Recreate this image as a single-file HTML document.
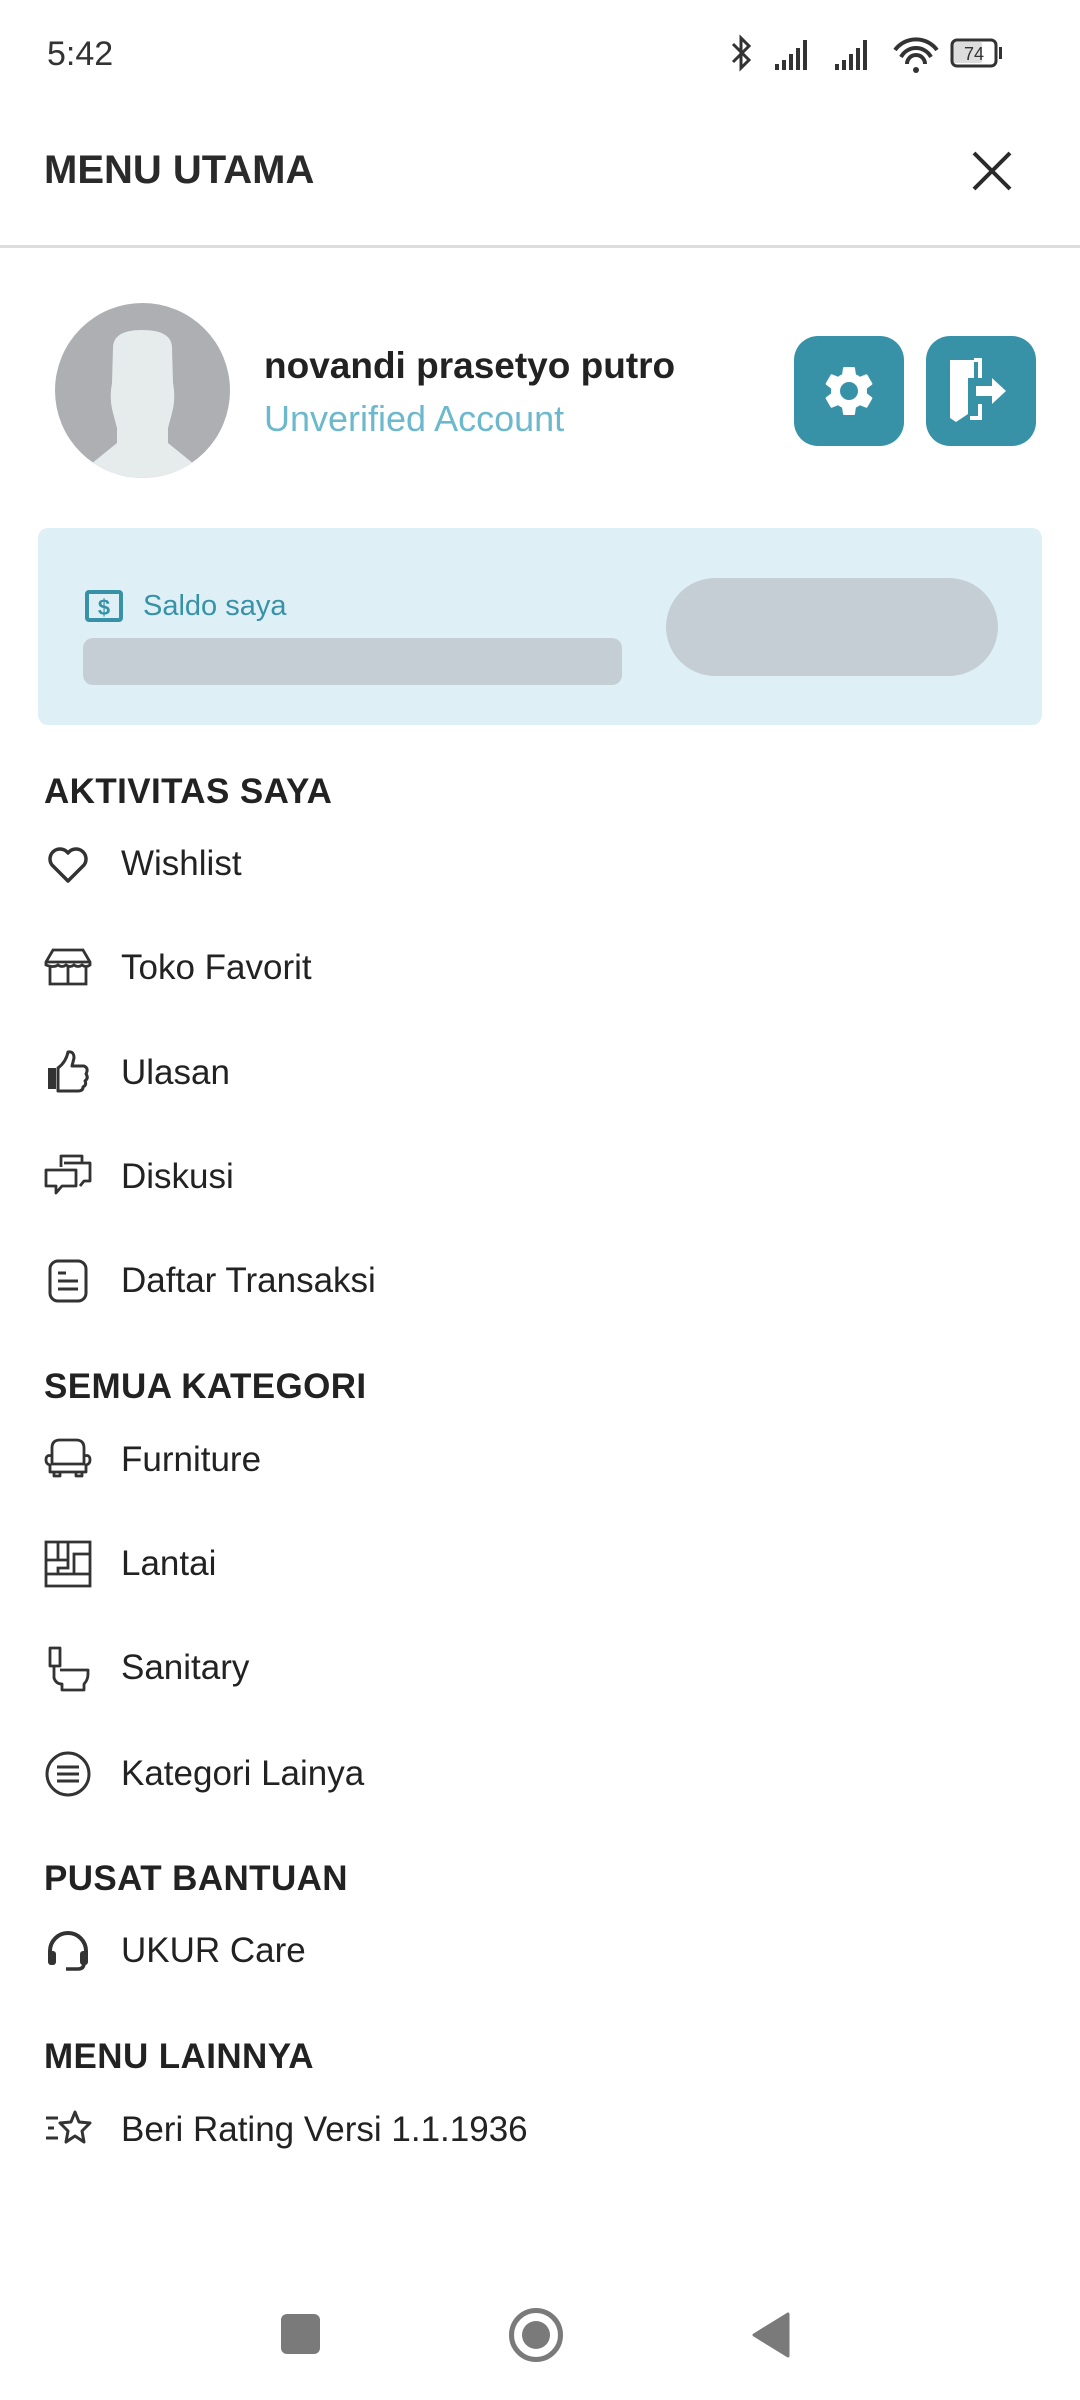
<!DOCTYPE html>
<html><head><meta charset="utf-8"><style>
*{margin:0;padding:0;box-sizing:border-box}
body{width:1080px;height:2400px;background:#fff;position:relative;overflow:hidden;font-family:"Liberation Sans",sans-serif;color:#222}
.a{position:absolute}
.t{position:absolute;left:121px;font-size:35px;line-height:40px;color:#222;white-space:nowrap}
.h{position:absolute;left:44px;font-size:35px;line-height:40px;font-weight:700;color:#222;letter-spacing:0.4px;white-space:nowrap}
.i{position:absolute;left:44px;width:48px;height:48px}
</style></head><body>
<!-- status bar -->
<div class="a" style="left:47px;top:34px;font-size:34px;line-height:40px;color:#333">5:42</div>
<svg class="a" style="left:729px;top:34px" width="310" height="42" viewBox="0 0 310 42">
<path d="M4 10 L20 26 L12 34 L12 4 L20 12 L4 28" fill="none" stroke="#333" stroke-width="3"/>
<g fill="#333"><rect x="46" y="30" width="4" height="6"/><rect x="53" y="26" width="4" height="10"/><rect x="60" y="20" width="4" height="16"/><rect x="67" y="14" width="4" height="22"/><rect x="74" y="6" width="4" height="30"/>
<rect x="106" y="30" width="4" height="6"/><rect x="113" y="26" width="4" height="10"/><rect x="120" y="20" width="4" height="16"/><rect x="127" y="14" width="4" height="22"/><rect x="134" y="6" width="4" height="30"/></g>
<path d="M166 16 A26 26 0 0 1 208 16 M172 23 A17 17 0 0 1 202 23 M178 30 A8 8 0 0 1 196 30" fill="none" stroke="#333" stroke-width="4"/>
<circle cx="187" cy="36" r="3" fill="#333"/>
<rect x="223" y="8" width="30" height="21" rx="2" fill="#ddd"/>
<rect x="223" y="6" width="44" height="26" rx="5" fill="none" stroke="#333" stroke-width="3"/>
<rect x="270" y="13" width="3" height="12" fill="#333"/>
<text x="245" y="26" font-size="18" text-anchor="middle" fill="#333" font-family="Liberation Sans">74</text>
</svg>
<!-- header -->
<div class="a" style="left:44px;top:148px;font-size:40px;line-height:44px;font-weight:700;color:#2a2a2a">MENU UTAMA</div>
<svg class="a" style="left:970px;top:150px" width="44" height="42" viewBox="0 0 44 42"><path d="M4 3 L40 39 M40 3 L4 39" stroke="#2a2a2a" stroke-width="4"/></svg>
<div class="a" style="left:0;top:245px;width:1080px;height:3px;background:#ddd"></div>
<!-- profile -->
<svg class="a" style="left:55px;top:303px" width="175" height="175" viewBox="0 0 175 175">
<defs><clipPath id="c"><circle cx="87.5" cy="87.5" r="87.5"/></clipPath></defs>
<circle cx="87.5" cy="87.5" r="87.5" fill="#adafb3"/>
<g clip-path="url(#c)" fill="#e6ecec"><path d="M58 45 Q58 27 87 27 Q117 27 117 45 L118 80 Q121 95 117 110 L113 125 L113 140 L150 170 L150 180 L25 180 L25 170 L62 140 L62 125 L58 110 Q54 95 57 80 Z"/></g>
</svg>
<div class="a" style="left:264px;top:344px;font-size:37px;line-height:44px;font-weight:700;color:#222">novandi prasetyo putro</div>
<div class="a" style="left:264px;top:398px;font-size:36px;line-height:42px;color:#6cb8cd">Unverified Account</div>
<div class="a" style="left:794px;top:336px;width:110px;height:110px;border-radius:24px;background:#3792a8"></div>
<svg class="a" style="left:819px;top:361px" width="60" height="60" viewBox="0 0 24 24"><path fill="#fff" d="M19.14 12.94c.04-.3.06-.61.06-.94s-.02-.64-.07-.94l2.030-1.58a.49.49 0 0 0 .12-.61l-1.92-3.32a.49.49 0 0 0-.59-.22l-2.39.96c-.5-.38-1.03-.7-1.62-.94l-.36-2.54a.48.48 0 0 0-.48-.41h-3.84c-.24 0-.43.17-.47.41l-.36 2.54c-.59.24-1.130.57-1.62.94l-2.39-.96a.48.48 0 0 0-.59.22L2.74 8.87c-.12.21-.08.47.12.61l2.03 1.58c-.05.3-.09.63-.09.94s.02.64.07.94l-2.03 1.58a.49.49 0 0 0-.12.61l1.92 3.32c.12.22.37.29.59.22l2.39-.96c.5.38 1.03.7 1.62.94l.36 2.54c.05.24.24.41.48.41h3.84c.24 0 .44-.17.47-.41l.36-2.54c.59-.24 1.13-.56 1.62-.94l2.39.96c.22.08.47 0 .59-.22l1.92-3.32c.12-.22.07-.47-.12-.61l-2.01-1.58zM12 15.6A3.6 3.6 0 1 1 12 8.4a3.6 3.6 0 0 1 0 7.2z"/></svg>
<div class="a" style="left:926px;top:336px;width:110px;height:110px;border-radius:24px;background:#3792a8"></div>
<svg class="a" style="left:946px;top:358px" width="70" height="66" viewBox="0 0 70 66"><path d="M4 2 L28 2 L28 20 L22 20 L22 56 L10 64 L4 60 Z" fill="#fff"/><path d="M28 2 L34 2 L34 20 M34 46 L34 60 L24 60" fill="none" stroke="#fff" stroke-width="4"/><path d="M30 28 L46 28 L46 20 L60 33 L46 46 L46 38 L30 38 Z" fill="#fff"/></svg>
<!-- saldo card -->
<div class="a" style="left:38px;top:528px;width:1004px;height:197px;border-radius:10px;background:#def0f6"></div>
<svg class="a" style="left:85px;top:590px" width="38" height="32" viewBox="0 0 38 32"><rect x="2" y="2" width="34" height="28" rx="2" fill="none" stroke="#3792a8" stroke-width="4"/><text x="19" y="25" font-size="22" font-weight="700" text-anchor="middle" fill="#3792a8" font-family="Liberation Sans">$</text></svg>
<div class="a" style="left:143px;top:589px;font-size:29px;line-height:34px;color:#3792a8">Saldo saya</div>
<div class="a" style="left:83px;top:638px;width:539px;height:47px;border-radius:10px;background:#c5ced4"></div>
<div class="a" style="left:666px;top:578px;width:332px;height:98px;border-radius:49px;background:#c5ced4"></div>
<!-- sections -->
<div class="h" style="top:772px">AKTIVITAS SAYA</div>
<svg class="i" style="top:840px" viewBox="0 0 48 48"><path d="M24 41 L8 25 A9.5 9.5 0 0 1 24 13 A9.5 9.5 0 0 1 40 25 Z" fill="none" stroke="#333" stroke-width="3.5" stroke-linejoin="round"/></svg>
<div class="t" style="top:844px">Wishlist</div>
<svg class="i" style="top:944px" viewBox="0 0 48 48"><path d="M9 6 L39 6 L46 18 L46 21 Q42 24 38 21 Q34 24 30 21 Q26 24 22 21 Q18 24 14 21 Q10 24 2 21 L2 18 Z M2 18 L46 18 M6 23 L6 40 L42 40 L42 23 M24 23 L24 40" fill="none" stroke="#333" stroke-width="2.8"/></svg>
<div class="t" style="top:948px">Toko Favorit</div>
<svg class="i" style="top:1048px" viewBox="0 0 48 48"><path d="M4 20 L12 20 L12 41 L4 41 Z" fill="#333"/><path d="M14 20 Q22 14 24 4 Q30 3 30 10 L28 18 L40 18 Q45 20 42 26 Q45 30 41 33 Q43 37 39 39 Q39 43 34 43 L14 43 Z" fill="none" stroke="#333" stroke-width="3" stroke-linejoin="round"/></svg>
<div class="t" style="top:1053px">Ulasan</div>
<svg class="i" style="top:1153px" viewBox="0 0 48 48"><path d="M17 14 L17 3 L38 3 L38 9 M2 17 L32 17 L32 33 L18 33 L12 40 L12 33 L2 33 Z M20 10 L46 10 L46 28 L40 28 L36 33" fill="none" stroke="#333" stroke-width="2.8" stroke-linejoin="round"/></svg>
<div class="t" style="top:1157px">Diskusi</div>
<svg class="i" style="top:1257px" viewBox="0 0 48 48"><rect x="6" y="4" width="36" height="40" rx="8" fill="none" stroke="#333" stroke-width="3"/><path d="M14 16 L22 16 M14 24 L34 24 M14 32 L34 32" stroke="#333" stroke-width="3"/></svg>
<div class="t" style="top:1261px">Daftar Transaksi</div>
<div class="h" style="top:1367px">SEMUA KATEGORI</div>
<svg class="i" style="top:1436px" viewBox="0 0 48 48"><path d="M8 20 L8 12 Q8 4 16 4 L32 4 Q40 4 40 12 L40 20 M8 20 Q2 18 2 24 Q2 28 6 29 L6 36 L42 36 L42 29 Q46 28 46 24 Q46 18 40 20 L40 28 L8 28 Z M10 36 L10 40 L16 40 L16 36 M32 36 L32 40 L38 40 L38 36" fill="none" stroke="#333" stroke-width="2.8" stroke-linejoin="round"/></svg>
<div class="t" style="top:1440px">Furniture</div>
<svg class="i" style="top:1540px" viewBox="0 0 48 48"><path d="M2 2 L46 2 L46 46 L2 46 Z M2 34 L46 34 M30 34 L30 14 L46 14 M2 20 L24 20 M14 2 L14 20 M24 2 L24 28 L14 28 L14 34" fill="none" stroke="#333" stroke-width="2.8"/></svg>
<div class="t" style="top:1544px">Lantai</div>
<svg class="i" style="top:1644px" viewBox="0 0 48 48"><path d="M6 4 L16 4 L16 22 L6 22 Z M10 22 L10 34 Q12 40 18 40 L18 46 L40 46 L40 40 Q44 36 44 30 L44 26 L16 26" fill="none" stroke="#333" stroke-width="2.8" stroke-linejoin="round"/></svg>
<div class="t" style="top:1648px">Sanitary</div>
<svg class="i" style="top:1750px" viewBox="0 0 48 48"><ellipse cx="24" cy="24" rx="21" ry="21" fill="none" stroke="#333" stroke-width="3"/><path d="M13 17 L35 17 M13 24 L35 24 M13 31 L35 31" stroke="#333" stroke-width="3"/></svg>
<div class="t" style="top:1754px">Kategori Lainya</div>
<div class="h" style="top:1859px">PUSAT BANTUAN</div>
<svg class="i" style="top:1927px" viewBox="0 0 48 48"><path d="M6 30 L6 24 A18 18 0 0 1 42 24 L42 30" fill="none" stroke="#333" stroke-width="4"/><rect x="4" y="24" width="8" height="14" rx="3" fill="#333"/><rect x="36" y="24" width="8" height="14" rx="3" fill="#333"/><path d="M40 36 Q40 42 34 42 L22 42" fill="none" stroke="#333" stroke-width="3.5"/></svg>
<div class="t" style="top:1931px">UKUR Care</div>
<div class="h" style="top:2037px">MENU LAINNYA</div>
<svg class="i" style="top:2106px" viewBox="0 0 48 48"><path d="M31 6 L35 16 L46 17 L38 25 L40 36 L31 30 L22 36 L24 25 L16 17 L27 16 Z" fill="none" stroke="#333" stroke-width="3" stroke-linejoin="round"/><path d="M2 12 L14 12 M4 22 L10 22 M2 32 L14 32" stroke="#333" stroke-width="3"/></svg>
<div class="t" style="top:2110px">Beri Rating Versi 1.1.1936</div>
<!-- nav bar -->
<div class="a" style="left:281px;top:2314px;width:39px;height:40px;border-radius:6px;background:#7a7a7a"></div>
<div class="a" style="left:509px;top:2308px;width:54px;height:54px;border-radius:50%;border:5px solid #7a7a7a"></div>
<div class="a" style="left:522px;top:2321px;width:28px;height:28px;border-radius:50%;background:#7a7a7a"></div>
<svg class="a" style="left:750px;top:2311px" width="42" height="48" viewBox="0 0 42 48"><path d="M38 3 L38 45 L4 24 Z" fill="#7a7a7a" stroke="#7a7a7a" stroke-width="3" stroke-linejoin="round"/></svg>
</body></html>
